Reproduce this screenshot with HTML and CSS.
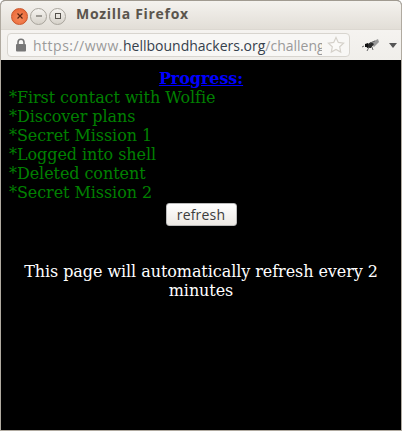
FILE: index.html
```html
<!DOCTYPE html>
<html>
<head>
  <meta charset="utf-8">
  <title>Mozilla Firefox</title>
  <link rel="stylesheet" href="styles.css">
</head>
<body>
<div class="window">
  <div class="titlebar">
    <div class="controls">
      <span class="ctl close"><svg width="8" height="8" viewBox="0 0 8 8"><path d="M1.5 1.5l5 5M6.5 1.5l-5 5" stroke="#5a2410" stroke-width="1.2"/></svg></span>
      <span class="ctl"><svg width="8" height="8" viewBox="0 0 8 8"><path d="M1 4h6" stroke="#55524c" stroke-width="1"/></svg></span>
      <span class="ctl"><svg width="8" height="8" viewBox="0 0 8 8"><rect x="1.5" y="1.5" width="5" height="5" fill="none" stroke="#55524c"/></svg></span>
    </div>
    <span class="title">Mozilla Firefox</span>
  </div>
  <div class="toolbar">
    <div class="urlbar">
      <svg class="lock" width="12" height="14" viewBox="0 0 12 14"><path d="M3 6V4.2a3 3 0 0 1 6 0V6" fill="none" stroke="#777" stroke-width="1.6"/><rect x="1" y="6" width="10" height="7.5" rx="1" fill="#777"/></svg>
      <div class="url"><span class="dim">https://www.</span>hellboundhackers.org<span class="dim path">/challenges/real12/index.php</span></div>
      <svg class="star" width="18" height="18" viewBox="0 0 18 18"><path d="M9 1.5l2.3 4.9 5.3.7-3.9 3.7 1 5.3L9 13.5l-4.7 2.6 1-5.3-3.9-3.7 5.3-.7z" fill="#fbfaf8" stroke="#d5d1ca" stroke-width="1.2"/></svg>
    </div>
    <svg class="fly" width="20" height="16" viewBox="0 0 20 16"><path d="M9 6l8-4 1 3-5 5z" fill="#999"/><path d="M5 8l5-3 3 2-3 4-4 0z" fill="#2a2a2a"/><path d="M4 7l3-1 0 4-3 0z" fill="#111"/><path d="M9 6l5-2M8 10l-2 4M11 10l1 3M3 9l-2 1" stroke="#666" stroke-width="1"/></svg>
    <span class="arrow"></span>
  </div>
  <div class="page">
    <a class="heading" href="#">Progress:</a>
    <div class="progress">
      <div>*First contact with Wolfie</div>
      <div>*Discover plans</div>
      <div>*Secret Mission 1</div>
      <div>*Logged into shell</div>
      <div>*Deleted content</div>
      <div>*Secret Mission 2</div>
    </div>
    <button class="refresh">refresh</button>
    <p class="note">This page will automatically refresh every 2 minutes</p>
  </div>
</div>
</body>
</html>
```

FILE: styles.css
```css
* {
  box-sizing: border-box;
}

html,
body {
  margin: 0;
  height: 100%;
  overflow: hidden;
}

.window {
  height: 431px;
  display: flex;
  flex-direction: column;
  border: 1px solid #b0aaa0;
  border-top-color: #a09a90;
  border-radius: 5px 5px 0 0;
  background: #000;
  overflow: hidden;
}

.titlebar {
  height: 28px;
  display: flex;
  align-items: center;
  background: linear-gradient(#f4f2ee, #e2ded7);
}

.controls {
  display: flex;
  gap: 2px;
  padding-left: 10px;
  padding-top: 2px;
  width: 75px;
}

.ctl {
  width: 17px;
  height: 17px;
  border-radius: 50%;
  display: flex;
  align-items: center;
  justify-content: center;
  border: 1px solid #a9a59d;
  background: linear-gradient(#f6f4f0, #d6d2ca);
}

.close {
  border-color: #c9562c;
  background: radial-gradient(circle at 50% 60%, #f58a5c, #e8612f);
}

.title {
  margin-bottom: 3px;
  font: bold 14px "Open Sans", "Noto Sans", sans-serif;
  color: #5a554d;
  letter-spacing: 0.7px;
}

.toolbar {
  height: 31px;
  display: flex;
  align-items: center;
  padding-left: 6px;
  background: linear-gradient(#f5f3f0, #f0eeea);
  border-top: 1px solid #dcd8d1;
}

.urlbar {
  width: 343px;
  height: 24px;
  display: flex;
  align-items: center;
  padding-left: 7px;
  background: #f8f7f5;
  border: 1px solid #d8d5cf;
  border-radius: 4px;
}

.url {
  width: 289px;
  margin-left: 6px;
  font: 14px "Open Sans", "Noto Sans", sans-serif;
  color: #35404c;
  white-space: nowrap;
  overflow: hidden;
}

.dim {
  color: #9a9a9a;
  letter-spacing: 0.5px;
}

.path {
  letter-spacing: 0;
}

.star {
  margin-left: 5px;
}

.fly {
  margin-left: 11px;
}

.arrow {
  margin-left: 8px;
  border-left: 4px solid transparent;
  border-right: 4px solid transparent;
  border-top: 5px solid #555;
}

.page {
  flex: 1;
  display: flex;
  flex-direction: column;
  align-items: center;
  padding: 9px 8px 0;
  font: 16px/19px "DejaVu Serif", serif;
  letter-spacing: -0.07px;
  color: #fff;
  background: #000;
}

.heading {
  font-weight: bold;
  color: #00f;
}

.progress {
  align-self: stretch;
  color: #008000;
}

.refresh {
  width: 71px;
  height: 23px;
  margin-top: 1px;
  padding: 0;
  font: 14px "Open Sans", "Noto Sans", sans-serif;
  letter-spacing: 0.2px;
  color: #3c3c3c;
  background: linear-gradient(#fff, #ece9e4);
  border: 1px solid #bbb;
  border-radius: 3px;
}

.note {
  margin: 36px 0 0;
  text-align: center;
}
```
